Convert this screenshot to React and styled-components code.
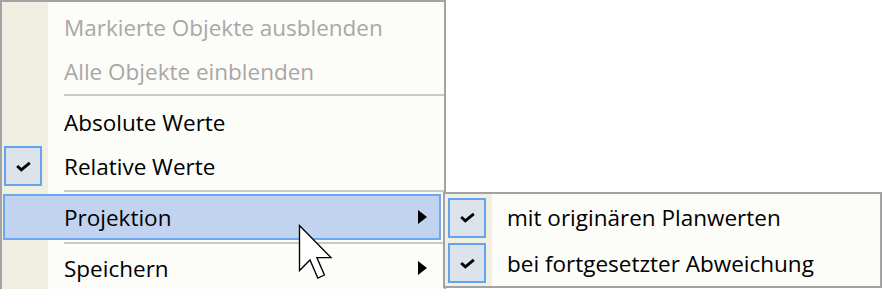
import React from "react"
import styled, { createGlobalStyle } from "styled-components"

const GlobalStyle = createGlobalStyle`
  html, body {
    margin: 0;
    padding: 0;
    background: #ffffff;
  }
  body {
    font-family: "Open Sans", "Noto Sans", sans-serif;
  }
`

const Screen = styled.div`
  position: relative;
  width: 883px;
  height: 289px;
  overflow: hidden;
  background: #ffffff;
`

const Menu = styled.div`
  width: 442px;
  border: 2px solid #a3a3a3;
  border-bottom: none;
  padding-top: 3px;
  background: linear-gradient(to right, #f1eee2 0 46px, #fcfcf8 46px);
`

const SubMenu = styled.div`
  position: absolute;
  left: 443px;
  top: 192px;
  width: 435px;
  border: 2px solid #a3a3a3;
  padding-top: 1px;
  background: linear-gradient(to right, #f1eee2 0 47px, #fcfcf8 47px);
`

const Item = styled.div`
  display: flex;
  align-items: center;
  height: ${p => p.h || 44}px;
  margin: 0 3px 0 1px;
  font-size: 22.5px;
  color: ${p => (p.disabled ? "#a9a7a5" : "#000000")};
  background: ${p => (p.active ? "#c1d3ee" : "transparent")};
  box-shadow: ${p => (p.active ? "inset 0 0 0 2px #6ba8f2" : "none")};
`

const Gutter = styled.div`
  width: ${p => p.w || 45}px;
  flex: none;
  display: flex;
  align-items: center;
`

const CheckBox = styled.div`
  width: 34px;
  height: 36px;
  margin-left: ${p => p.offset || 1}px;
  border: 2px solid #62a4f2;
  background: #dde3ea;
  display: flex;
  align-items: center;
  justify-content: center;
`

const Label = styled.span`
  flex: 1;
  padding-left: ${p => p.indent || 16}px;
  white-space: nowrap;
`

const Arrow = styled.div`
  width: 0;
  height: 0;
  margin-right: 14px;
  border-top: 7px solid transparent;
  border-bottom: 7px solid transparent;
  border-left: 9px solid #000000;
`

const Separator = styled.div`
  margin: ${p => p.space || "1px 0 4px"} 62px;
  margin-right: 0;
  height: 2px;
  background: #c9c8c4;
`

const Cursor = styled.svg`
  position: absolute;
  left: 298px;
  top: 224px;
`

const Check = () => (
  <svg width="15" height="11" viewBox="0 0 15 11">
    <path d="M1.2 5 L5.3 8.8 L13.8 1.8" fill="none" stroke="#000" strokeWidth="2.9" />
  </svg>
)

const MenuItem = ({ label, disabled, checked, active, submenu, h }) => (
  <Item disabled={disabled} active={active} h={h}>
    <Gutter>
      {checked && (
        <CheckBox>
          <Check />
        </CheckBox>
      )}
    </Gutter>
    <Label>{label}</Label>
    {submenu && <Arrow />}
  </Item>
)

const SubItem = ({ label, h }) => (
  <Item h={h}>
    <Gutter w={47}>
      <CheckBox offset={2}>
        <Check />
      </CheckBox>
    </Gutter>
    <Label indent={14}>{label}</Label>
  </Item>
)

export default function App() {
  return (
    <Screen>
      <GlobalStyle />
      <Menu>
        <MenuItem label="Markierte Objekte ausblenden" disabled />
        <MenuItem label="Alle Objekte einblenden" disabled />
        <Separator />
        <MenuItem label="Absolute Werte" />
        <MenuItem label="Relative Werte" checked />
        <Separator space="2px 0 2px" />
        <MenuItem label="Projektion" active submenu h={46} />
        <Separator space="2px 0 2px" />
        <MenuItem label="Speichern" submenu />
      </Menu>
      <SubMenu>
        <SubItem label="mit originären Planwerten" h={45} />
        <SubItem label="bei fortgesetzter Abweichung" h={46} />
      </SubMenu>
      <Cursor width="36" height="57" viewBox="0 0 12 19">
        <path
          d="M0.5 0.5 L0.5 15.5 L4 12 L6.6 18 L8.8 17 L6.3 11.2 L11 11.2 Z"
          fill="#ffffff"
          stroke="#000000"
          strokeWidth="0.45"
          strokeLinejoin="miter"
        />
      </Cursor>
    </Screen>
  )
}
